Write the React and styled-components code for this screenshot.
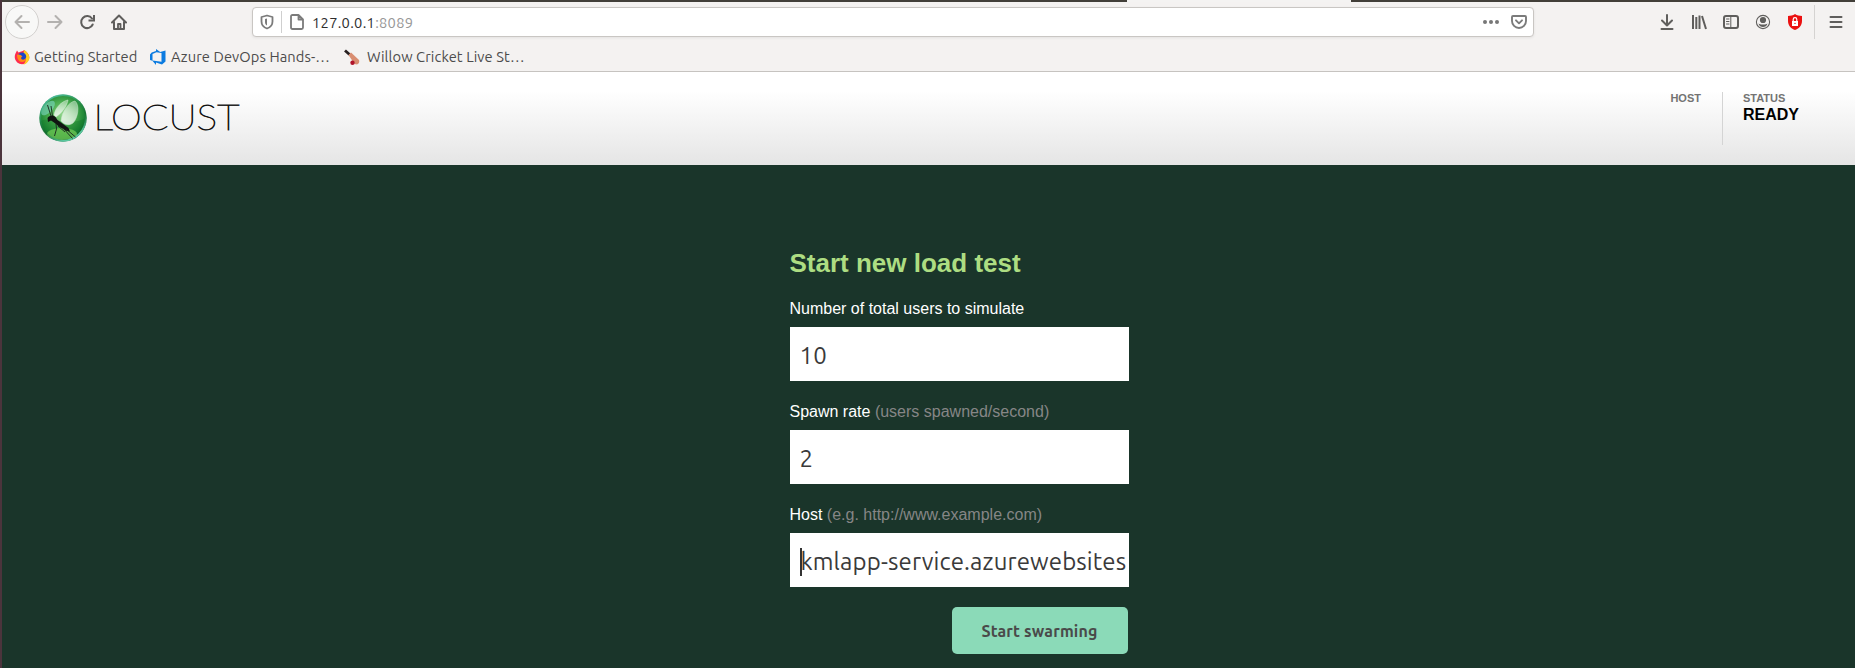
import React from "react";
import styled, { createGlobalStyle } from "styled-components";

const Global = createGlobalStyle`
  *, *::before, *::after { box-sizing: border-box; }
  body { margin: 0; background: #1a352a; overflow: hidden; }
`;

const ui = `"Ubuntu", "Noto Sans", sans-serif`;
const arial = `"Liberation Sans", Arial, sans-serif`;

const Window = styled.div`
  height: 668px;
  border-left: 2px solid #4b343c;
  display: flex;
  flex-direction: column;
  font-family: ${ui};
`;

const TabEdge = styled.div`
  height: 2px;
  display: flex;
  background: #423f39;
`;
const ActiveTab = styled.div`
  width: 224px;
  margin-left: 1125px;
  background: #f4f3f2;
`;

const Chrome = styled.div`
  height: 70px;
  background: #f4f2f1;
  border-bottom: 1px solid #c6c3c0;
`;

const Toolbar = styled.div`
  height: 40px;
  padding: 0 11px 0 3px;
  display: flex;
  align-items: center;
`;

const BackButton = styled.div`
  width: 34px;
  height: 34px;
  margin-right: 8px;
  border: 1px solid #d2d0ce;
  border-radius: 50%;
  background: #f8f8f7;
  display: flex;
  align-items: center;
  justify-content: center;
`;

const ToolIcon = styled.svg`
  width: 16px;
  height: 16px;
  flex: none;
  display: block;
  margin-right: ${(p) => p.$gap || 0}px;
  fill: none;
  stroke: ${(p) => p.$color || "#5f5e5c"};
  stroke-width: 2;
  stroke-linecap: round;
  stroke-linejoin: round;
`;

const UrlBar = styled.div`
  width: 1282px;
  height: 30px;
  margin-left: 125px;
  padding: 0 6px 0 6px;
  display: flex;
  align-items: center;
  background: #fff;
  border: 1px solid #c9c6c3;
  border-radius: 4px;
  box-shadow: 0 1px 3px rgba(0, 0, 0, 0.07);
`;
const UrlDivider = styled.div`
  width: 1px;
  height: 22px;
  margin: 0 7px 0 6px;
  background: #cfcfcf;
`;
const Url = styled.div`
  flex: 1;
  font-size: 14.67px;
  line-height: 20px;
  letter-spacing: 0.3px;
  padding-top: 1px;
  color: #2e2e2e;
  span { color: #979797; }
`;

const Tools = styled.div`
  flex: 1;
  display: flex;
  align-items: center;
  justify-content: flex-end;
`;
const ToolDivider = styled.div`
  width: 1px;
  height: 34px;
  margin: 0 13px 0 11px;
  background: #d5d3d1;
`;

const Bookmarks = styled.div`
  height: 29px;
  padding: 1px 0 0 12px;
  display: flex;
  align-items: center;
`;
const Bookmark = styled.div`
  display: flex;
  align-items: center;
  width: ${(p) => p.$w}px;
  gap: ${(p) => p.$gap || 4}px;
  font-size: 14.67px;
  line-height: 20px;
  letter-spacing: 0.1px;
  color: #4c4c4c;
  white-space: nowrap;
  svg { flex: none; }
`;

const Header = styled.header`
  height: 93px;
  padding: 20px 56px 0 37px;
  display: flex;
  justify-content: space-between;
  background: linear-gradient(#fff 0%, #fff 20%, #e5e5e5 100%);
`;
const Logo = styled.div`
  display: flex;
  height: 52px;
  align-items: center;
`;
const Stats = styled.div`
  display: flex;
  font-family: ${arial};
  font-weight: bold;
`;
const Stat = styled.div`
  height: 53px;
  padding: ${(p) => (p.$last ? "0 0 0 20px" : "0 21px 0 0")};
  border-left: ${(p) => (p.$last ? "1px solid #d4d4d4" : "0")};
`;
const StatLabel = styled.div`
  font-size: 11px;
  line-height: 12px;
  color: #737373;
`;
const StatValue = styled.div`
  padding-top: 2px;
  font-size: 16px;
  line-height: 18px;
  color: #000;
`;

const Page = styled.main`
  flex: 1;
  padding: 80px 0 0 787.5px;
  background: #1a352a;
`;
const Form = styled.form`
  width: 339px;
  font-family: ${arial};
`;
const Title = styled.h2`
  margin: 0 0 15px;
  font-size: 26px;
  line-height: 36px;
  color: #addd82;
`;
const Field = styled.label`
  display: block;
  height: 103px;
  font-size: 16px;
  line-height: 26px;
  color: #fff;
`;
const Hint = styled.span`
  color: #868686;
`;
const Input = styled.div`
  height: 54px;
  margin-top: 5px;
  padding: 3px 0 0 10px;
  display: flex;
  align-items: center;
  overflow: hidden;
  background: #fff;
  font-family: ${ui};
  font-size: 24px;
  letter-spacing: 0.13px;
  white-space: nowrap;
  color: #3a3a3a;
`;
const Caret = styled.span`
  width: 2px;
  height: 28px;
  margin-right: -1px;
  flex: none;
  background: #333;
`;
const Submit = styled.button`
  display: block;
  width: 176px;
  height: 47px;
  margin: 2px 1px 0 auto;
  padding: 0;
  border: 0;
  border-radius: 5px;
  background: #8bdab8;
  color: #4a4a4a;
  font: bold 16px ${ui};
  letter-spacing: 0.15px;
`;

function LocustMark() {
  return (
    <svg width="50" height="50" viewBox="0 0 50 50">
      <defs>
        <radialGradient id="orb" cx="48%" cy="42%" r="58%">
          <stop offset="0" stopColor="#8fd48a" />
          <stop offset="0.45" stopColor="#4cae50" />
          <stop offset="0.82" stopColor="#1d8435" />
          <stop offset="1" stopColor="#0d4d2a" />
        </radialGradient>
        <linearGradient id="rim" x1="0" y1="0" x2="0.5" y2="1">
          <stop offset="0" stopColor="#5ed0c4" />
          <stop offset="0.35" stopColor="#3fae86" stopOpacity="0.5" />
          <stop offset="0.7" stopColor="#126b2c" stopOpacity="0.5" />
          <stop offset="1" stopColor="#5bc7a0" />
        </linearGradient>
        <linearGradient id="wing" x1="0.6" y1="0" x2="0.4" y2="1">
          <stop offset="0" stopColor="#fff" stopOpacity="0.4" />
          <stop offset="1" stopColor="#fff" stopOpacity="0.8" />
        </linearGradient>
      </defs>
      <circle cx="24" cy="25" r="23.6" fill="url(#orb)" />
      <path d="M1 28C12 23 30 34 47 25C48 37 38 48 24 48.5C10 48 1 39 1 28Z" fill="#087222" opacity="0.3" />
      <ellipse cx="23" cy="41" rx="15" ry="6" fill="#76ce59" opacity="0.7" />
      <ellipse cx="9" cy="15" rx="9" ry="4.5" transform="rotate(-48 9 15)" fill="#7fd8c4" opacity="0.6" />
      <circle cx="24" cy="25" r="22.8" fill="none" stroke="url(#rim)" strokeWidth="1.8" />
      <path d="M15 22C16 15 23 8 29 7C28 13 23 20 17 24Z" fill="url(#wing)" stroke="#d8f0d8" strokeWidth="0.5" />
      <path d="M22 28C23 18 30 9 36 8C41 12 39 25 34 30C30 33 25 32 22 28Z" fill="url(#wing)" stroke="#cdebcf" strokeWidth="0.5" />
      <g fill="#101412">
        <path d="M8.5 25C10 22 14.5 21.5 16.5 24L18.5 27L24 31L29.5 35L31 38.5L27 37.8L20 33.5L15 29.5L12 27.5L9 29Z" />
      </g>
      <g fill="none" stroke="#18251d" strokeWidth="0.9">
        <path d="M12 23L8.5 12M13.5 23L12 13M27 36L36.5 44M24 35L33.5 45.5M17 31L17.5 36L15.5 43M19 33L26 39" />
      </g>
    </svg>
  );
}

const Wordmark = styled.svg`
  width: 156px;
  height: 40px;
  margin-left: 5px;
  overflow: visible;
  text {
    font-family: "Lato", "Inter", sans-serif;
    font-weight: 200;
    font-size: 36px;
    fill: #111;
    stroke: #111;
    stroke-width: 0.9px;
  }
`;

export default function App() {
  return (
    <>
      <Global />
      <Window>
        <TabEdge><ActiveTab /></TabEdge>
        <Chrome>
          <Toolbar>
            <BackButton>
              <ToolIcon $color="#b3b1af" viewBox="0 0 16 16"><path d="M15 8H1.5M7.5 2L1.5 8L7.5 14" /></ToolIcon>
            </BackButton>
            <ToolIcon $gap={16} $color="#b3b1af" viewBox="0 0 16 16"><path d="M1 8H14.5M8.5 2L14.5 8L8.5 14" /></ToolIcon>
            <ToolIcon $gap={16} viewBox="0 0 16 16"><path d="M13 4.5A6 6 0 1 0 13.7 10.5" /><path d="M15 1V6.5H9.5" strokeLinecap="butt" strokeLinejoin="miter" /></ToolIcon>
            <ToolIcon viewBox="0 0 16 16"><path d="M1 8.5L8 1.5L15 8.5M3 8V15H13V8" /><path d="M7 15V10H9.5V15" strokeWidth="1.8" /></ToolIcon>
            <UrlBar>
              <ToolIcon $color="#7b7b7b" viewBox="0 0 16 16"><path d="M8 1.5L13.5 3V7.5C13.5 11 11 13.5 8 14.5C5 13.5 2.5 11 2.5 7.5V3Z" strokeWidth="1.8" /><path d="M8 4.5L6 5V8C6 9.8 6.8 10.8 8 11.5Z" fill="#7b7b7b" stroke="none" /></ToolIcon>
              <UrlDivider />
              <ToolIcon $gap={7} $color="#7b7b7b" viewBox="0 0 16 16"><path d="M3.5 1H9.5L14 5.5V13.5Q14 15 12.5 15H3.5Q2 15 2 13.5V2.5Q2 1 3.5 1ZM9.5 1V5.5H14" strokeWidth="1.8" /></ToolIcon>
              <Url>127.0.0.1<span>:8089</span></Url>
              <ToolIcon $gap={12} $color="#777" viewBox="0 0 16 16"><g fill="#777" stroke="none"><circle cx="2" cy="8" r="2" /><circle cx="8" cy="8" r="2" /><circle cx="14" cy="8" r="2" /></g></ToolIcon>
              <ToolIcon $color="#7b7b7b" viewBox="0 0 16 16"><path d="M2 2H14Q15 2 15 3V7A7 7 0 0 1 1 7V3Q1 2 2 2ZM5 6.3L8 9.3L11 6.3" strokeWidth="1.9" /></ToolIcon>
            </UrlBar>
            <Tools>
              <ToolIcon $gap={16} viewBox="0 0 16 16"><path d="M8 1V11.5M3 6.5L8 11.5L13 6.5M2.5 15H13.5" /></ToolIcon>
              <ToolIcon $gap={16} viewBox="0 0 16 16"><path d="M2 1V15M5.3 3V15M8.5 1.5V15M11 2L15 15" strokeLinecap="butt" /></ToolIcon>
              <ToolIcon $gap={16} viewBox="0 0 16 16"><rect x="1" y="2" width="14" height="12" rx="2" /><path d="M7.8 2V14M3.5 5H6M3.5 7.5H6M3.5 10H6" strokeWidth="1" /></ToolIcon>
              <ToolIcon $gap={16} viewBox="0 0 16 16"><circle cx="8" cy="8" r="6.6" strokeWidth="1.1" /><g fill="#5f5e5c" stroke="none"><circle cx="8" cy="6" r="3.1" /><path d="M3.5 9.5C5 10.5 6 10.4 8 10.4S11 10.5 12.5 9.5C12 12 10 13 8 13S4 12 3.5 9.5Z" /></g></ToolIcon>
              <ToolIcon viewBox="0 0 16 16"><path d="M8 0C10 1.5 12.5 1.7 15 2V7C15 12 11.5 14.8 8 16C4.5 14.8 1 12 1 7V2C3.5 1.7 6 1.5 8 0Z" fill="#eb1010" stroke="none" /><rect x="5" y="7" width="6" height="5" fill="#fff" stroke="none" /><path d="M6.2 7V5.5A1.8 1.8 0 0 1 9.8 5.5V7" stroke="#fff" strokeWidth="1.2" /><circle cx="8" cy="9.4" r=".7" fill="#eb1010" stroke="none" /></ToolIcon>
              <ToolDivider />
              <ToolIcon viewBox="0 0 16 16"><path d="M2.5 3H13.5M2.5 8H13.5M2.5 13H13.5" /></ToolIcon>
            </Tools>
          </Toolbar>
          <Bookmarks>
            <Bookmark $w={136}>
              <svg width="16" height="16" viewBox="0 0 16 16">
                <path d="M1.5 4.5L3 1.5L4.5 3.5C7 2 9.5 2.5 10 1C13 3 15.5 5.5 15.3 9A7.3 7 0 0 1 .8 9C.7 7 .9 5.7 1.5 4.5Z" fill="#ff2b4c" />
                <path d="M10 1C13 3 15.5 5.5 15.3 9C15 12.5 12 15.5 9 15.8C12 14 13 8 9.5 5Z" fill="#ffcf20" />
                <circle cx="8" cy="7.8" r="4.2" fill="#1f45c8" />
                <path d="M3 6C5 5 7 6 8.5 7.5C7 8 6.5 9.5 8 10.5C10 11 11.5 10 12 8.5C12 11.5 10.5 13 8 13C5 13 3 10 3 6Z" fill="#ff8a16" />
              </svg>
              Getting Started
            </Bookmark>
            <Bookmark $w={194} $gap={5}>
              <svg width="16" height="16" viewBox="0 0 16 16">
                <path fillRule="evenodd" fill="#0b7be0" d="M0 5.5L1.7 3.6L6 2V0L10.2 3L15.5 1.5V12.5L12 15.5L6 13.5V16L2.4 11.8L0 11ZM2.5 5V11.5L11.5 12.7V4L6.5 3.2Z" />
              </svg>
              Azure DevOps Hands-…
            </Bookmark>
            <Bookmark $gap={7}>
              <svg width="16" height="16" viewBox="0 0 16 16">
                <path d="M1 1.5L5.5 5.5" stroke="#272020" strokeWidth="2.8" />
                <path d="M4.5 6L7 3.5L15 11Q16 14 13 15.5L10.5 15Z" fill="#d98d70" />
                <circle cx="8.5" cy="13.7" r="2.2" fill="#b0142b" />
              </svg>
              Willow Cricket Live St…
            </Bookmark>
          </Bookmarks>
        </Chrome>
        <Header>
          <Logo>
            <LocustMark />
            <Wordmark viewBox="0 0 156 40"><text x="-0.5" y="32" textLength="146" lengthAdjust="spacingAndGlyphs">LOCUST</text></Wordmark>
          </Logo>
          <Stats>
            <Stat><StatLabel>HOST</StatLabel></Stat>
            <Stat $last><StatLabel>STATUS</StatLabel><StatValue>READY</StatValue></Stat>
          </Stats>
        </Header>
        <Page>
          <Form onSubmit={(e) => e.preventDefault()}>
            <Title>Start new load test</Title>
            <Field>Number of total users to simulate<Input>10</Input></Field>
            <Field>Spawn rate <Hint>(users spawned/second)</Hint><Input>2</Input></Field>
            <Field>Host <Hint>(e.g. http://www.example.com)</Hint><Input><Caret />kmlapp-service.azurewebsites</Input></Field>
            <Submit>Start swarming</Submit>
          </Form>
        </Page>
      </Window>
    </>
  );
}
